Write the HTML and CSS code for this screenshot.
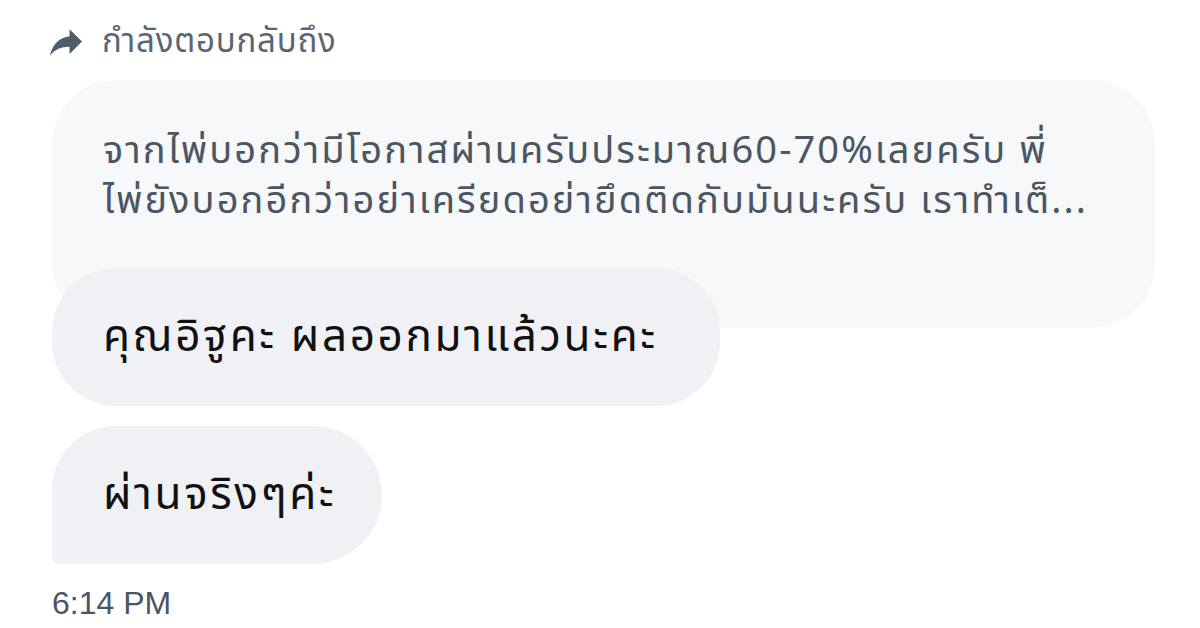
FILE: index.html
```html
<!DOCTYPE html>
<html lang="th">
<head>
<meta charset="utf-8">
<link rel="stylesheet" href="styles.css">
</head>
<body>
<div class="chat">
  <div class="reply-head">
    <svg class="reply-icon" viewBox="3 5 18 15" width="32" height="27"><path d="M14 9V5l7 7-7 7v-4.1c-5 0-8.5 1.6-11 5.1 1-5 4-10 11-11z" fill="#4f5c6a"/></svg>
    <span class="reply-label">กำลังตอบกลับถึง</span>
  </div>
  <div class="bubble quoted">
    <div class="qline">จากไพ่บอกว่ามีโอกาสผ่านครับประมาณ60-70%เลยครับ พี่</div>
    <div class="qline">ไพ่ยังบอกอีกว่าอย่าเครียดอย่ายึดติดกับมันนะครับ เราทำเต็...</div>
  </div>
  <div class="bubble msg first">คุณอิฐูคะ ผลออกมาแล้วนะคะ</div>
  <div class="bubble msg last">ผ่านจริงๆค่ะ</div>
  <div class="time">6:14 PM</div>
</div>
</body>
</html>
```
FILE: styles.css
```css
html, body {
  margin: 0;
  padding: 0;
  background: #ffffff;
}
body {
  font-family: "Noto Sans Thai", "Noto Sans", "DejaVu Sans", sans-serif;
}
.chat {
  display: flex;
  flex-direction: column;
  align-items: flex-start;
  padding: 22px 0 0 50px;
}
.reply-head {
  display: flex;
  align-items: center;
  gap: 20px;
  height: 40px;
}
.reply-icon {
  display: block;
}
.reply-label {
  font-size: 33px;
  line-height: 40px;
  letter-spacing: 0.8px;
  color: #5b6672;
}
.bubble {
  box-sizing: border-box;
}
.quoted {
  margin: 18px 0 0 2px;
  width: 1103px;
  height: 248px;
  border-radius: 64px;
  background: #f7f8f9;
  padding: 47px 0 0 51px;
}
.qline {
  font-size: 38px;
  line-height: 50px;
  height: 50px;
  letter-spacing: 2.1px;
  color: #4b5662;
  white-space: nowrap;
}
.msg {
  display: flex;
  align-items: center;
  height: 138px;
  margin-left: 2px;
  padding: 0 40px 0 51px;
  font-size: 44px;
  letter-spacing: 2.6px;
  color: #111111;
  background: #eff1f4;
  white-space: nowrap;
}
.first {
  margin-top: -60px;
  width: 668px;
  border-radius: 64px;
}
.last {
  margin-top: 20px;
  width: 330px;
  border-radius: 64px 69px 69px 6px;
}
.time {
  margin-top: 21px;
  margin-left: 2px;
  font-family: "Liberation Sans", Arial, sans-serif;
  font-size: 32px;
  line-height: 36px;
  color: #4b5662;
}
```
